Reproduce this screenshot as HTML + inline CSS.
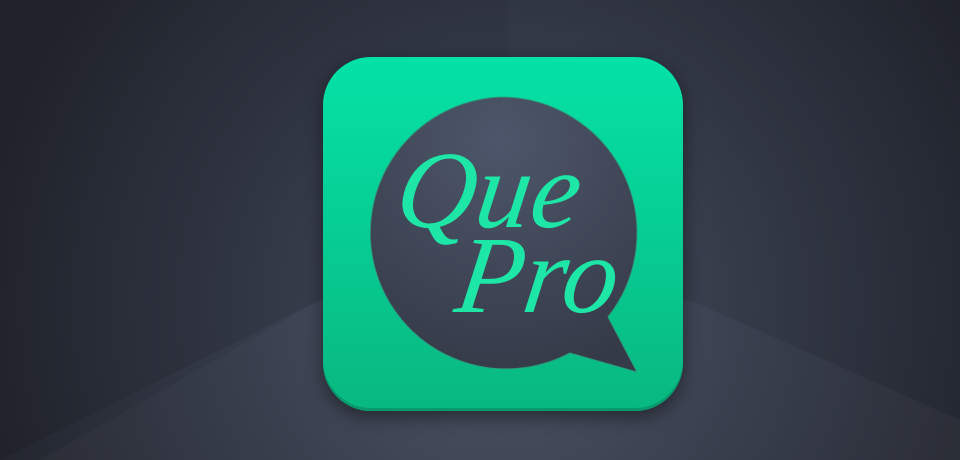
<!DOCTYPE html>
<html><head><style>
html,body{margin:0;padding:0}
body{width:960px;height:460px;overflow:hidden;position:relative;background:#2b303c;font-family:"Liberation Serif",serif}
.bg{position:absolute;inset:0}
.icon{position:absolute;left:323px;top:57px;width:360px;height:354px;border-radius:48px;background:linear-gradient(#05e2a6,#08b880);box-shadow:0 6px 18px rgba(0,0,0,.45),inset 0 -3px 0 #079a6c}
.txt{position:absolute;color:#1de6a6;font-style:italic;font-family:"Liberation Serif",serif;transform:skewX(-8deg)}
</style></head><body>
<svg class="bg" width="960" height="460">
<defs>
<radialGradient id="g" cx="500" cy="300" r="540" gradientUnits="userSpaceOnUse">
<stop offset="0" stop-color="#4a5265"/><stop offset="0.5" stop-color="#343a48"/><stop offset="1" stop-color="#22252d"/></radialGradient>
</defs>
<rect width="960" height="460" fill="url(#g)"/>
<polygon points="0,0 508,0 508,300 320,300 0,460" fill="#000" opacity="0.08"/>
<polygon points="508,0 960,0 960,420 690,300 508,300" fill="#000" opacity="0.03"/>
<polygon points="320,300 690,300 960,420 960,460 40,460" fill="#fff" opacity="0.025"/>
</svg>
<div class="icon"></div>
<svg style="position:absolute;left:0;top:0" width="960" height="460">
<defs><radialGradient id="c2" cx="500" cy="140" r="240" gradientUnits="userSpaceOnUse">
<stop offset="0" stop-color="#4d566a"/><stop offset="1" stop-color="#353a48"/></radialGradient></defs>
<path d="M500,97 A136,136 0 1 0 570,353 L637,372 L608,317 A136,136 0 0 0 500,97 Z" fill="url(#c2)" stroke="#2b9d7c" stroke-width="1"/>
</svg>
<div class="txt" style="left:398px;top:135px;font-size:110px;line-height:1">Que</div>
<div class="txt" style="left:458px;top:220px;font-size:110px;line-height:1">Pro</div>
</body></html>
